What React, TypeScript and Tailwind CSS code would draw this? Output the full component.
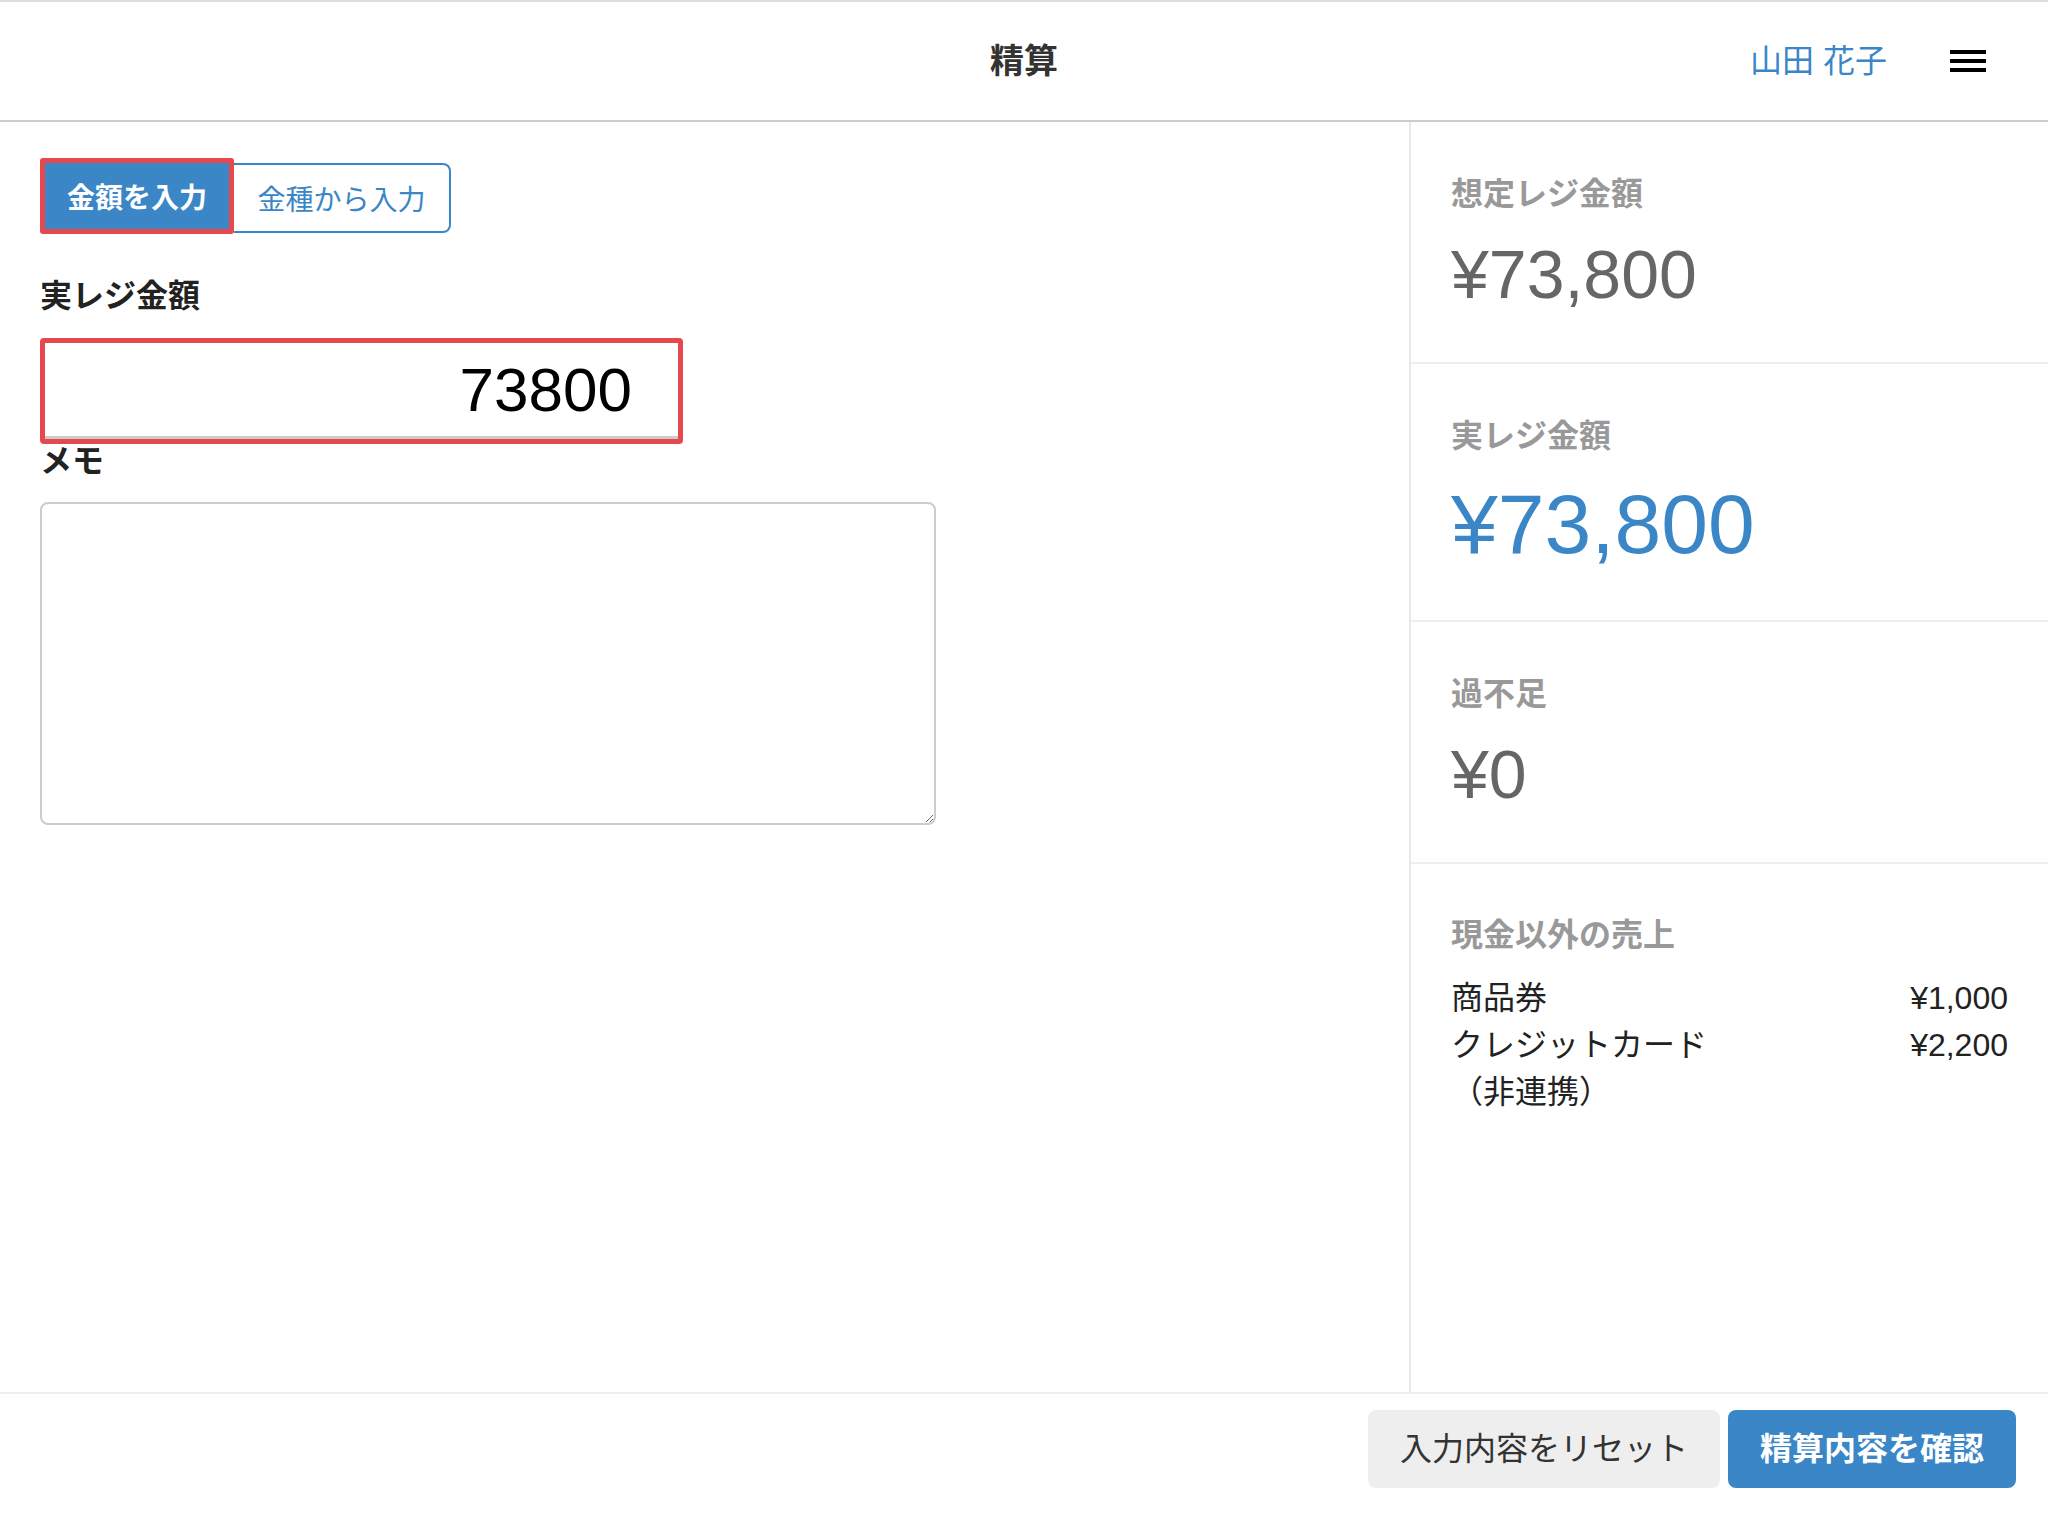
import React from 'react';

const nonCash = [
  { label: '商品券', amount: '¥1,000' },
  { label: 'クレジットカード（非連携）', amount: '¥2,200' },
];

const Section: React.FC<{ label: string; value: string; valueClass: string }> = ({ label, value, valueClass }) => (
  <div className="px-10 pt-12 pb-[54px] border-b-2 border-[#eeeeee]">
    <div className="text-[32px] font-bold leading-[48px] text-[#999999]">{label}</div>
    <div className={`mt-[22px] leading-none ${valueClass}`}>{value}</div>
  </div>
);

export default function App() {
  return (
    <div className="w-full h-[1520px] flex flex-col bg-white text-[#222222] [font-family:'Liberation_Sans','Noto_Sans_CJK_JP',sans-serif]">
      {/* header */}
      <header className="h-[122px] shrink-0 grid grid-cols-[1fr_auto_1fr] items-center border-t-2 border-[#dddddd] border-b-2 border-b-[#cccccc]">
        <div />
        <h1 className="text-[34px] font-bold text-[#333333]">精算</h1>
        <div className="flex items-center justify-end pr-[62px] gap-[63px]">
          <span className="text-[32px] text-[#3b86c6]">山田 花子</span>
          <button className="flex flex-col gap-[5px]">
            <span className="block w-[36px] h-[4px] bg-black" />
            <span className="block w-[36px] h-[4px] bg-black" />
            <span className="block w-[36px] h-[4px] bg-black" />
          </button>
        </div>
      </header>

      {/* body */}
      <div className="flex flex-1 min-h-0">
        <main className="w-[1411px] shrink-0 border-r-2 border-[#e8e8e8] pl-10 pt-9">
          <div className="flex items-start">
            <button className="w-[194px] h-[76px] pt-[5px] border-[5px] border-[#e5484d] rounded-[3px] bg-[#3b86c6] text-white font-bold text-[28px]">
              金額を入力
            </button>
            <button className="mt-[5px] w-[217px] h-[70px] pt-[5px] border-2 border-l-0 border-[#3b86c6] rounded-r-[8px] text-[#3b86c6] text-[28px]">
              金種から入力
            </button>
          </div>

          <label className="block mt-[38px] text-[32px] font-bold leading-[48px] text-[#222222]">実レジ金額</label>
          <div className="mt-[18px] w-[643px] h-[106px] border-[5px] border-[#e5484d] rounded-[4px] bg-white shadow-[inset_0_-3px_0_#cccccc]">
            <input
              type="text"
              defaultValue="73800"
              readOnly
              className="w-full h-full pb-[4px] bg-transparent text-right pr-[46px] text-[62px] text-black outline-none"
            />
          </div>

          <label className="block mt-[1px] text-[32px] font-bold leading-[32px] text-[#222222]">メモ</label>
          <textarea className="block mt-[25px] w-[896px] h-[323px] border-2 border-[#cccccc] rounded-[8px] outline-none" />
        </main>

        <aside className="flex-1 flex flex-col">
          <Section label="想定レジ金額" value="¥73,800" valueClass="text-[68px] text-[#666666]" />
          <Section label="実レジ金額" value="¥73,800" valueClass="text-[84px] text-[#3b86c6]" />
          <Section label="過不足" value="¥0" valueClass="text-[68px] text-[#666666]" />
          <div className="flex-1 px-10 pt-[47px]">
            <div className="text-[32px] font-bold leading-[48px] text-[#999999]">現金以外の売上</div>
            <div className="mt-4">
              {nonCash.map(row => (
                <div key={row.label} className="flex justify-between text-[32px] leading-[47px] text-[#222222]">
                  <span className="w-[270px]">{row.label}</span>
                  <span>{row.amount}</span>
                </div>
              ))}
            </div>
          </div>
        </aside>
      </div>

      {/* footer */}
      <footer className="h-[128px] shrink-0 border-t-2 border-[#eeeeee] flex items-start justify-end gap-2 pt-4 pr-8">
        <button className="h-[78px] px-8 rounded-[8px] bg-[#eeeeee] text-[32px] text-[#333333]">入力内容をリセット</button>
        <button className="h-[78px] px-8 rounded-[8px] bg-[#3b86c6] text-[32px] font-bold text-white">精算内容を確認</button>
      </footer>
    </div>
  );
}
